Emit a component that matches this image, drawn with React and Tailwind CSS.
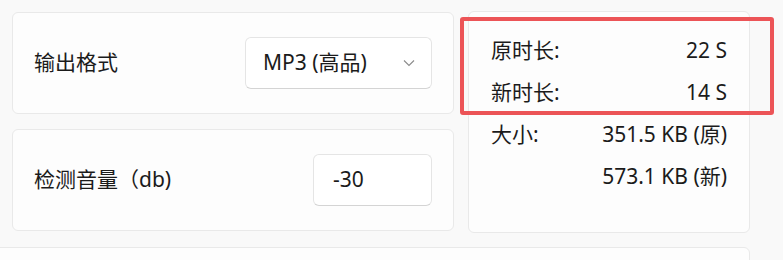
import React from "react";

const font = { fontFamily: '"Noto Sans", "Noto Sans CJK SC", sans-serif' };

function Card({ className = "", children }) {
  return (
    <div className={`rounded-[6px] border border-[#e9e9e9] bg-[#fdfdfd] ${className}`}>
      {children}
    </div>
  );
}

function Row({ label, value }) {
  return (
    <div className="flex h-[42px] items-center justify-between">
      <span>{label}</span>
      <span>{value}</span>
    </div>
  );
}

export default function App() {
  return (
    <div
      className="relative h-[260px] w-[783px] overflow-hidden bg-[#f9f9f9] text-[21px] text-[#1b1b1b]"
      style={font}
    >
      <div className="flex gap-[14px] pl-[12px] pt-[11px]">
        <div className="flex w-[442px] flex-col gap-[15px] pt-[1px]">
          <Card className="flex h-[102px] items-center justify-between px-[21px]">
            <span>输出格式</span>
            <div className="flex h-[52px] w-[187px] items-center justify-between rounded-[6px] border border-[#e5e5e5] border-b-[#d4d4d4] bg-white pl-[17px] pr-[16px]">
              <span>MP3 (高品)</span>
              <svg width="12" height="8" viewBox="0 0 12 8" fill="none">
                <path d="M1 1.5 L6 6.5 L11 1.5" stroke="#8a8a8a" strokeWidth="1.1" />
              </svg>
            </div>
          </Card>
          <Card className="flex h-[102px] items-center justify-between px-[21px]">
            <span>检测音量（db)</span>
            <div className="flex h-[52px] w-[119px] items-center rounded-[6px] border border-[#e5e5e5] border-b-[#d4d4d4] bg-white pl-[19px]">
              <span>-30</span>
            </div>
          </Card>
        </div>
        <Card className="h-[222px] w-[282px] px-[22px] pt-[18px]">
          <Row label="原时长:" value="22 S" />
          <Row label="新时长:" value="14 S" />
          <Row label="大小:" value="351.5 KB (原)" />
          <Row label="" value="573.1 KB (新)" />
        </Card>
      </div>
      <div className="ml-[-10px] mt-[14px] h-[40px] w-[760px] rounded-[6px] border border-[#e9e9e9] bg-[#fdfdfd]" />
      <div className="absolute left-[460px] top-[17px] h-[98px] w-[314px] rounded-[3px] border-[4px] border-[#ec5457]" />
    </div>
  );
}
